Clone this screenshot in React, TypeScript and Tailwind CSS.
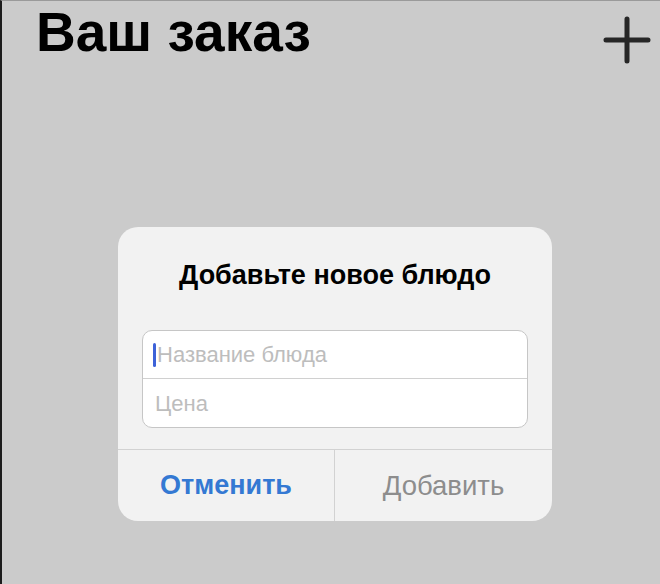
const App = () => {
  return (
    <div className="h-[584px] w-[660px] overflow-hidden bg-[#cbcbcb] border-l-2 border-l-[#1c1c1c] border-t border-t-[#9a9a9a] font-['Liberation_Sans',Arial,sans-serif]">
      <div className="flex h-[63px] items-start justify-between pl-[34px] pr-[9px]">
        <h1 className="text-[55px] font-bold leading-[62px] text-black">
          Ваш заказ
        </h1>
        <svg width="48" height="48" viewBox="0 0 48 48" className="mt-[15px]">
          <path d="M24 3v42M3 24h42" stroke="#262626" strokeWidth="5" strokeLinecap="round" />
        </svg>
      </div>

      <div className="mt-[163px] ml-[116px] w-[434px] rounded-[20px] bg-[#f2f2f2]">
        <h2 className="pt-[32px] text-center text-[27px] font-bold leading-[32px] text-black">
          Добавьте новое блюдо
        </h2>

        <div className="mx-[24px] mt-[39px] rounded-[10px] border border-[#c6c6c6] bg-white">
          <div className="flex h-[48px] items-center border-b border-[#d0d0d0] pl-[10px]">
            <span className="mr-[1px] h-[24px] w-[3px] rounded-full bg-[#3d62d8]" />
            <span className="text-[22px] text-[#bdbdbd]">Название блюда</span>
          </div>
          <div className="flex h-[48px] items-center pl-[12px]">
            <span className="text-[22px] text-[#bdbdbd]">Цена</span>
          </div>
        </div>

        <div className="mt-[21px] grid grid-cols-2 border-t border-[#d2d2d2]">
          <div className="flex h-[71px] items-center justify-center border-r border-[#d2d2d2]">
            <span className="text-[27px] font-bold text-[#3479d3]">Отменить</span>
          </div>
          <div className="flex h-[71px] items-center justify-center">
            <span className="text-[27.5px] text-[#8d8d8d]">Добавить</span>
          </div>
        </div>
      </div>
    </div>
  )
}

export default App
